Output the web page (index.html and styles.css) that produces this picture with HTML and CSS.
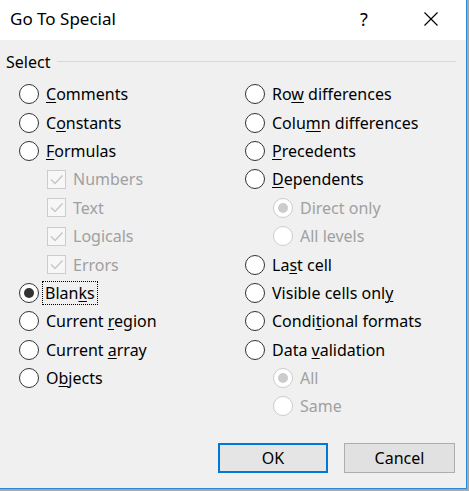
FILE: index.html
```html
<!DOCTYPE html>
<html>
<head>
<meta charset="utf-8">
<link rel="stylesheet" href="styles.css">
</head>
<body>
<div class="window">
  <div class="titlebar">
    <div class="title">Go To Special</div>
    <div class="help">?</div>
    <div class="close">
      <svg width="16" height="16" viewBox="0 0 16 16"><path d="M1.5 1.5 L14.5 14.5 M14.5 1.5 L1.5 14.5" stroke="#000" stroke-width="1.2" fill="none"/></svg>
    </div>
  </div>
  <div class="content">
    <div class="legend"><span class="legend-text">Select</span><span class="legend-line"></span></div>
    <div class="columns">
      <div class="col">
        <div class="row"><span class="radio"></span><span class="label"><u>C</u>omments</span></div>
        <div class="row"><span class="radio"></span><span class="label">C<u>o</u>nstants</span></div>
        <div class="row"><span class="radio"></span><span class="label"><u>F</u>ormulas</span></div>
        <div class="row sub disabled"><span class="check"><svg width="17" height="17" viewBox="0 0 17 17"><path d="M3 8.5 L7 12.5 L14.5 4.5" stroke="#c6c6c6" stroke-width="1.4" fill="none"/></svg></span><span class="label">Numbers</span></div>
        <div class="row sub disabled"><span class="check"><svg width="17" height="17" viewBox="0 0 17 17"><path d="M3 8.5 L7 12.5 L14.5 4.5" stroke="#c6c6c6" stroke-width="1.4" fill="none"/></svg></span><span class="label">Text</span></div>
        <div class="row sub disabled"><span class="check"><svg width="17" height="17" viewBox="0 0 17 17"><path d="M3 8.5 L7 12.5 L14.5 4.5" stroke="#c6c6c6" stroke-width="1.4" fill="none"/></svg></span><span class="label">Logicals</span></div>
        <div class="row sub disabled"><span class="check"><svg width="17" height="17" viewBox="0 0 17 17"><path d="M3 8.5 L7 12.5 L14.5 4.5" stroke="#c6c6c6" stroke-width="1.4" fill="none"/></svg></span><span class="label">Errors</span></div>
        <div class="row"><span class="radio checked"></span><span class="label focus">Blan<u>k</u>s</span></div>
        <div class="row"><span class="radio"></span><span class="label">Current <u>r</u>egion</span></div>
        <div class="row"><span class="radio"></span><span class="label">Current <u>a</u>rray</span></div>
        <div class="row"><span class="radio"></span><span class="label">O<u>b</u>jects</span></div>
      </div>
      <div class="col">
        <div class="row"><span class="radio"></span><span class="label">Ro<u>w</u> differences</span></div>
        <div class="row"><span class="radio"></span><span class="label">Colu<u>m</u>n differences</span></div>
        <div class="row"><span class="radio"></span><span class="label"><u>P</u>recedents</span></div>
        <div class="row"><span class="radio"></span><span class="label"><u>D</u>ependents</span></div>
        <div class="row sub disabled"><span class="radio checked"></span><span class="label">Direct only</span></div>
        <div class="row sub disabled"><span class="radio"></span><span class="label">All levels</span></div>
        <div class="row"><span class="radio"></span><span class="label">La<u>s</u>t cell</span></div>
        <div class="row"><span class="radio"></span><span class="label">Visible cells onl<u>y</u></span></div>
        <div class="row"><span class="radio"></span><span class="label">Condi<u>t</u>ional formats</span></div>
        <div class="row"><span class="radio"></span><span class="label">Data <u>v</u>alidation</span></div>
        <div class="row sub disabled"><span class="radio checked"></span><span class="label">All</span></div>
        <div class="row sub disabled"><span class="radio"></span><span class="label">Same</span></div>
      </div>
    </div>
    <div class="buttons">
      <button class="btn default">OK</button>
      <button class="btn">Cancel</button>
    </div>
  </div>
</div>
</body>
</html>
```
FILE: styles.css
```css
html, body {
  margin: 0;
  padding: 0;
}
body {
  background: #a8a8a8;
  width: 469px;
  height: 491px;
  overflow: hidden;
  font-family: "Noto Sans", "Open Sans", sans-serif;
  font-size: 16px;
  color: #000;
}
.window {
  width: 466px;
  height: 488px;
  background: #f0f0f0;
  border-right: 1px solid #2b88d8;
  border-bottom: 1px solid #2b88d8;
  display: flex;
  flex-direction: column;
}
.titlebar {
  height: 40px;
  background: #fff;
  display: flex;
  align-items: center;
  flex: none;
}
.title {
  flex: 1;
  padding-left: 10px;
  font-size: 17px;
  line-height: 20px;
  margin-bottom: 3px;
}
.help {
  width: 30px;
  text-align: center;
  font-size: 18px;
  line-height: 20px;
  margin-right: 29px;
  margin-bottom: 3px;
}
.close {
  width: 46px;
  height: 16px;
  display: flex;
  justify-content: center;
  margin-right: 12px;
  margin-bottom: 3px;
}
.content {
  flex: 1;
  display: flex;
  flex-direction: column;
}
.legend {
  margin-top: 12px;
  height: 20px;
  display: flex;
  align-items: center;
  padding-left: 6px;
  padding-right: 10px;
}
.legend-text {
  line-height: 20px;
}
.legend-line {
  flex: 1;
  height: 1px;
  background: #d9d9d9;
  margin-left: 7px;
  margin-top: -1px;
}
.columns {
  display: grid;
  grid-template-columns: 226px 1fr;
  padding-left: 19px;
  padding-top: 8px;
}
.row {
  height: 28.4px;
  display: flex;
  align-items: center;
}
.row.sub {
  padding-left: 28px;
}
.label {
  margin-left: 7px;
  line-height: 20px;
  white-space: nowrap;
}
.disabled .label {
  color: #a0a0a0;
}
u {
  text-decoration-thickness: 1px;
  text-underline-offset: 2px;
}
.label.focus {
  margin-left: 4px;
  padding: 1px 2px;
  outline: 1px dotted #000;
  outline-offset: 0;
}
.radio {
  width: 20px;
  height: 20px;
  box-sizing: border-box;
  border: 1.5px solid #333;
  border-radius: 50%;
  background: #fff;
  display: flex;
  align-items: center;
  justify-content: center;
  flex: none;
}
.radio.checked::after {
  content: "";
  width: 10px;
  height: 10px;
  border-radius: 50%;
  background: #333;
}
.disabled .radio {
  border-color: #cccccc;
}
.disabled .radio.checked::after {
  background: #cccccc;
}
.check {
  width: 19px;
  height: 19px;
  box-sizing: border-box;
  border: 1px solid #cccccc;
  background: #f7f7f7;
  display: flex;
  align-items: center;
  justify-content: center;
  flex: none;
}
.check svg {
  display: block;
}
.buttons {
  display: flex;
  justify-content: flex-end;
  gap: 16px;
  padding-right: 11px;
  margin-top: 22px;
}
.btn {
  font-family: "Noto Sans", "Open Sans", sans-serif;
  font-size: 16px;
  color: #000;
  height: 30px;
  width: 111px;
  background: #e1e1e1;
  border: 1px solid #adadad;
  padding: 0;
  margin: 0;
  line-height: 26px;
}
.btn.default {
  width: 110px;
  border: 2px solid #0078d7;
  background: #e5e5e5;
}
```
